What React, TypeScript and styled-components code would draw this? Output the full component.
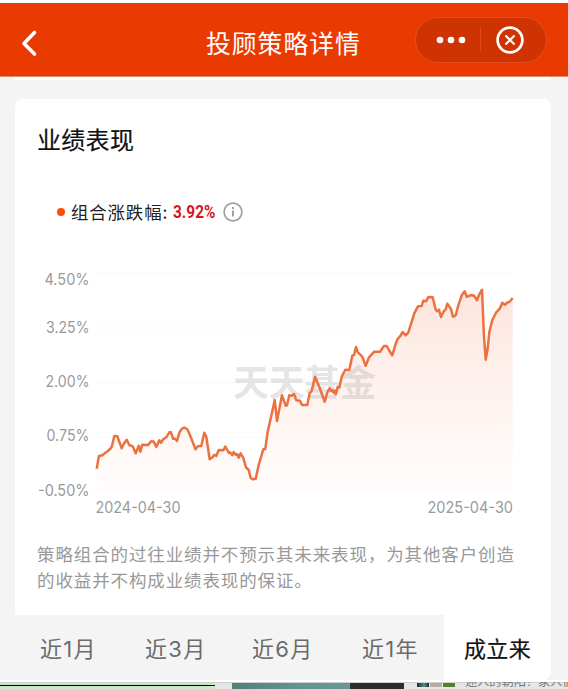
import React from "react";
import styled, { createGlobalStyle } from "styled-components";

const GlobalStyle = createGlobalStyle`
  * { box-sizing: border-box; }
  body {
    margin: 0;
    background: #fff;
    font-family: "Noto Sans CJK SC", sans-serif;
    overflow: hidden;
  }
`;

const Page = styled.div`
  width: 568px;
  height: 689px;
  padding-top: 3px;
  overflow: hidden;
  display: flex;
  flex-direction: column;
`;

const Header = styled.header`
  flex: none;
  height: 74px;
  display: grid;
  grid-template-columns: 206px 1fr 132px;
  align-items: center;
  padding-right: 21px;
  background: #e93a02;
  border-bottom: 1px solid #dd8b6c;
  color: #fff;
`;

const BackButton = styled.button`
  justify-self: start;
  margin: 6px 0 0 20px;
  padding: 0;
  border: 0;
  background: none;
  display: flex;
`;

const Title = styled.h1`
  margin: 4px 0 0;
  font-size: 24.8px;
  line-height: 36px;
  font-weight: 400;
  letter-spacing: 1px;
  white-space: nowrap;
`;

const Capsule = styled.div`
  height: 46px;
  display: grid;
  grid-template-columns: 65px 1fr;
  align-items: center;
  border-radius: 23px;
  border: 1px solid #e2501f;
  background: #cf3301;
`;

const CapsuleButton = styled.button<{ $divided?: boolean }>`
  height: 25px;
  padding: 0 ${(p) => (p.$divided ? 0 : 7)}px 0 ${(p) => (p.$divided ? 6 : 0)}px;
  border: 0;
  border-right: ${(p) => (p.$divided ? "1px solid #dc4819" : "0")};
  background: none;
  display: flex;
  align-items: center;
  justify-content: center;
`;

const Body = styled.main`
  flex: none;
  height: 603px;
  padding: 0 17px 0 15px;
  background: #f4f4f4;
`;

const PreviousCard = styled.div`
  height: 3px;
  background: #fff;
`;

const Card = styled.section`
  margin-top: 19px;
  height: 581px;
  border-radius: 8px;
  background: #fff;
  display: flex;
  flex-direction: column;
`;

const Heading = styled.h2`
  margin: 22px 0 0 22px;
  font-size: 24px;
  line-height: 36px;
  font-weight: 400;
  -webkit-text-stroke: 0.2px #111;
  color: #111;
  letter-spacing: 0.3px;
`;

const Legend = styled.div`
  margin: 42px 0 0 42px;
  height: 26px;
  display: flex;
  align-items: center;
  font-size: 17.4px;
  color: #222;
  white-space: nowrap;
`;

const Dot = styled.span`
  width: 8px;
  height: 8px;
  margin-right: 6px;
  border-radius: 50%;
  background: #fb4d08;
`;

const LegendLabel = styled.span`
  width: 102px;
  margin-top: -2px;
  letter-spacing: 0.9px;
`;

const Change = styled.strong`
  width: 50px;
  font: 700 17.5px/26px Roboto, sans-serif;
  transform: scaleX(0.88);
  transform-origin: left;
  color: #d9161d;
`;

const Chart = styled.svg`
  flex: none;
  display: block;
  width: 536px;
  height: 270px;
  margin-top: 25px;
`;

const Disclaimer = styled.p`
  margin: 21px 0 0 22px;
  font-size: 17.5px;
  line-height: 26px;
  letter-spacing: 0.88px;
  color: #999;
  white-space: nowrap;
`;

const Tabs = styled.nav`
  flex: none;
  height: 65px;
  margin: auto 0 0 -15px;
  padding-left: 40px;
  display: grid;
  grid-template-columns: 105px 107px 110px 82px 107px;
  background: #f4f4f4;
`;

const Tab = styled.button<{ $active?: boolean }>`
  border: 0;
  padding: 2px 0 0;
  text-align: ${(p) => (p.$active ? "center" : "left")};
  border-bottom-right-radius: ${(p) => (p.$active ? 8 : 0)}px;
  background: ${(p) => (p.$active ? "#fff" : "transparent")};
  color: ${(p) => (p.$active ? "#111" : "#6b6b6b")};
  font: 400 22px/32px Inter, "Noto Sans CJK SC", sans-serif;
  -webkit-text-stroke: ${(p) => (p.$active ? "0.2px #111" : "0")};
  letter-spacing: ${(p) => (p.$active ? 0.4 : 1.3)}px;
  white-space: nowrap;
`;

const Strip = styled.footer`
  flex: none;
  height: 9px;
  border-top: 2px solid #fff;
  display: flex;
  overflow: hidden;
  background: #e6e6e6;
  box-shadow: inset 0 1px #cfcfcf;
`;

const GreenRow = styled.div`
  flex: none;
  width: 215px;
  margin-top: 1px;
  background: #c7e7c8;
  border-top: 2px solid #c7e7c8;

  &::before {
    content: "";
    display: block;
    height: 1px;
    background: #000;
  }
`;

const Swatch = styled.div<{ $width: number; $gap?: number; $color: string }>`
  flex: none;
  width: ${(p) => p.$width}px;
  height: 7px;
  margin: 1px 0 0 ${(p) => p.$gap ?? 0}px;
  background: ${(p) => p.$color};
`;

const Thumbs = styled.div`
  flex: none;
  display: flex;
  margin-left: 13px;
`;

const Thumb = styled.div<{ $color: string }>`
  width: 12px;
  height: 4px;
  margin: 1px 1px 0 0;
  background: ${(p) => p.$color};
`;

const Caption = styled.span`
  flex: none;
  margin: -10px 0 0 9px;
  font-size: 12.2px;
  line-height: 18px;
  color: #777;
  white-space: nowrap;
`;

const series =
  "96.7,468.7 99,456 102.3,455.3 105,453 108.3,450.7 110.5,448.5 112,446 114.3,436 117.3,436.3 119,441 121.7,448.3 124,443.5 126.7,439.7 129.3,445 133,446.7 135.7,453.3 138.7,445.7 140.3,451.7 142.3,444.7 148.3,445 151,441.3 153.7,441.5 156.3,447 159.3,440.3 161,442.7 163.3,439.3 166.3,437.3 169.3,432.3 171,432.3 173,438.7 175,438.7 177,441 179.3,432.7 181.7,428.9 184.3,427.5 187.3,429.3 189.5,434 192.7,442 195.5,449.3 198.3,446 201.3,446 204.3,432.7 206.3,436.7 209.7,459.3 212.7,457 214.3,454.7 216.3,456 218.7,450 223.3,450.3 225.3,446.5 228.7,452.7 230,452.3 232.3,455.3 233.7,452 235.7,454.7 237.3,454.3 238.7,457.7 240.7,453.3 243.3,458 246,467.3 248.7,470 250.7,478 253,479.3 255.7,478.7 258.7,465 263.3,449.3 265.3,449 267.7,431.7 271,417.3 274.7,400 277,421 282,395.3 285.7,405.7 287,405.3 289.3,395.3 292.3,395.7 294,394 296.3,400.3 300,400.7 302,405 307.3,405 309.7,393.3 311.7,391 315,376.7 319.7,388 324.7,401.7 327.3,392.3 329.7,388.3 331,391 332.3,390 333.7,392.7 335,390.7 335.7,394.3 337.7,387 339.3,387.7 341.7,376.7 345.3,369.7 349.3,370 352.3,355.7 354,355 356,347 357.7,352 362.3,356.7 365.7,365.7 369,357.3 374.3,351.7 380,351.7 384,346 386.7,346 389.7,351.3 392.3,355.3 395,346 397.3,339.3 400.3,336 402.7,332 405.7,335.3 408.3,332.7 414.3,313.3 418,306.3 421.7,306 423.3,300.7 426,301.3 428.3,297 432.7,297.3 435.7,309.7 437.3,311.3 439,309.7 441,317 443.7,311.3 445.7,309.3 447.3,303.7 451,309 453,316.7 455.7,315.3 458.3,305.3 462,294.7 464.7,291.3 466.7,296.7 471.7,295 474.3,296 477,300.3 479,295 482,289.7 484,336.7 485.7,359.7 487.7,348.3 489.3,332.3 492.3,320 496,312.7 500,308.3 502.3,302.7 505,304.7 507.7,302.3 509.3,302 512.7,298";

const yLabels = [
  { text: "4.50%", y: 285, width: 45 },
  { text: "3.25%", y: 332.5, width: 43.5 },
  { text: "2.00%", y: 386.5, width: 44 },
  { text: "0.75%", y: 441, width: 43 },
  { text: "-0.50%", y: 495.5, width: 51.5 },
];

const gridLines = [273, 328, 382, 437, 491];
const tabs = ["近1月", "近3月", "近6月", "近1年", "成立来"];

const PerformanceChart = () => (
  <Chart viewBox="15 250 536 270">
    <defs>
      <linearGradient id="area" x1="0" y1="290" x2="0" y2="491" gradientUnits="userSpaceOnUse">
        <stop offset="0" stopColor="#fde5dd" />
        <stop offset="0.5" stopColor="#fef2ee" />
        <stop offset="1" stopColor="#fffdfc" />
      </linearGradient>
    </defs>
    {gridLines.map((y) => (
      <path key={y} d={`M96 ${y}H513`} stroke="#f9f9f9" />
    ))}
    <polygon points={`96.7,491 ${series} 512.7,491`} fill="url(#area)" />
    <text
      x="233"
      y="395.5"
      fontSize="36"
      fontWeight="700"
      fill="#999"
      fillOpacity="0.27"
      textLength="143"
    >
      天天基金
    </text>
    <polyline
      points={series}
      fill="none"
      stroke="#ed7140"
      strokeWidth="2.5"
      strokeLinejoin="round"
    />
    <g fontFamily="Inter, sans-serif" fontSize="15.5" fill="#999">
      {yLabels.map(({ text, y, width }) => (
        <text key={text} x={89.5 - width} y={y} textLength={width} lengthAdjust="spacingAndGlyphs">
          {text}
        </text>
      ))}
      <text x="95.5" y="512.5" textLength="85" lengthAdjust="spacingAndGlyphs">
        2024-04-30
      </text>
      <text x="427.5" y="512.5" textLength="85.5" lengthAdjust="spacingAndGlyphs">
        2025-04-30
      </text>
    </g>
  </Chart>
);

export default function App() {
  return (
    <Page>
      <GlobalStyle />
      <Header>
        <BackButton aria-label="返回">
          <svg width="18" height="28" viewBox="0 0 18 28" fill="none" stroke="#fff">
            <path d="M14.5 3.5 4 14.5 14.5 25" strokeWidth="3.6" strokeLinecap="round" strokeLinejoin="round" />
          </svg>
        </BackButton>
        <Title>投顾策略详情</Title>
        <Capsule>
          <CapsuleButton $divided aria-label="更多">
            <svg width="30" height="8" viewBox="0 0 30 8" fill="#fff">
              <circle cx="4" cy="4" r="3.3" />
              <circle cx="15" cy="4" r="3.3" />
              <circle cx="26" cy="4" r="3.3" />
            </svg>
          </CapsuleButton>
          <CapsuleButton aria-label="关闭">
            <svg width="30" height="30" viewBox="0 0 30 30" fill="none" stroke="#fff">
              <circle cx="15" cy="15" r="12.4" strokeWidth="2.7" />
              <path d="m10.5 10.5 9 9m0-9-9 9" strokeWidth="2.1" />
            </svg>
          </CapsuleButton>
        </Capsule>
      </Header>
      <Body>
        <PreviousCard />
        <Card>
          <Heading>业绩表现</Heading>
          <Legend>
            <Dot />
            <LegendLabel>组合涨跌幅:</LegendLabel>
            <Change>3.92%</Change>
            <svg width="20" height="20" viewBox="0 0 20 20" fill="none" stroke="#a0a0a0">
              <circle cx="10" cy="10" r="8.9" strokeWidth="1.7" />
              <path d="M10 8.4v6.2M10 5v2" strokeWidth="2" />
            </svg>
          </Legend>
          <PerformanceChart />
          <Disclaimer>
            策略组合的过往业绩并不预示其未来表现，为其他客户创造
            <br />
            的收益并不构成业绩表现的保证。
          </Disclaimer>
          <Tabs>
            {tabs.map((tab) => (
              <Tab key={tab} $active={tab === "成立来"}>
                {tab}
              </Tab>
            ))}
          </Tabs>
        </Card>
      </Body>
      <Strip>
        <GreenRow />
        <Swatch $width={118} $gap={17} $color="linear-gradient(90deg, #527f79, #5f9890 60%, #669990)" />
        <Swatch $width={54} $color="#2f2d2e" />
        <Thumbs>
          <Thumb $color="linear-gradient(90deg, #1d2b27, #4b9490 60%, #222)" />
          <Thumb $color="#b8aaa5" />
          <Thumb $color="#56802f" />
        </Thumbs>
        <Caption>迷人的朝阳！家人们</Caption>
      </Strip>
    </Page>
  );
}
